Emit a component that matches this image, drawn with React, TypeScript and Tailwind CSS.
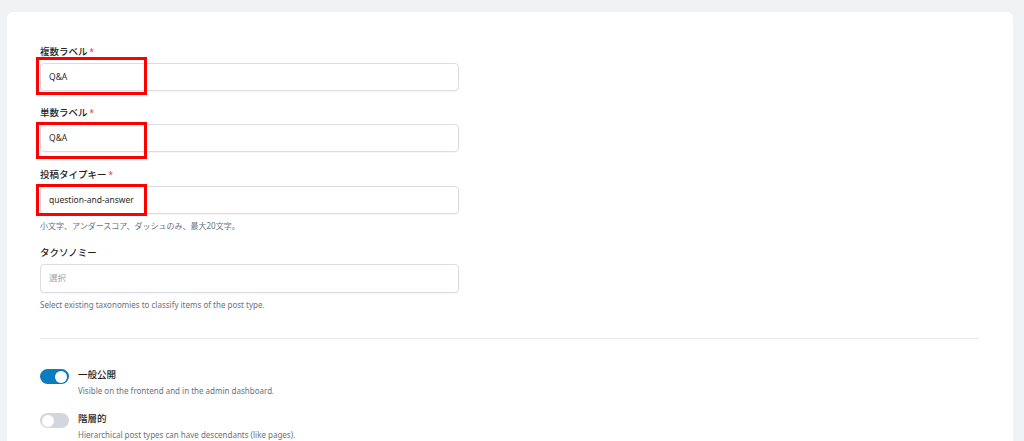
import React from 'react';

const font = { fontFamily: '"Noto Sans", "Noto Sans CJK JP", sans-serif' };

interface FieldProps {
  label: string;
  required?: boolean;
  value?: string;
  placeholder?: string;
  help?: string;
  mark?: string;
  tall?: boolean;
  className?: string;
}

const Field: React.FC<FieldProps> = ({ label, required, value, placeholder, help, mark, tall, className = '' }) => (
  <div className={className}>
    <div className="h-[14px] pt-[2px] leading-3 text-[9.5px] font-medium text-[#1e1e1e] mb-[5px]">
      {label}
      {required && <span className="text-[#e5484d] text-[8px] ml-[2px] align-top">*</span>}
    </div>
    <div className="relative w-[419px]">
      <div
        className={`${tall ? 'h-[29px]' : 'h-[28px]'} rounded-[4px] border border-[#dcdde4] bg-white shadow-[0_1px_1px_rgba(0,0,0,0.04)] flex items-center pl-[8px] text-[8.5px]`}
      >
        {value ? (
          <span className="text-[#2a2a2a]">{value}</span>
        ) : (
          <span className="text-[#9aa0a6]">{placeholder}</span>
        )}
      </div>
      {mark && <div className={`absolute border-[3px] border-[#ff0000] ${mark}`} />}
    </div>
    {help && <div className="mt-[6px] h-3 leading-3 text-[8px] text-[#6b7280]">{help}</div>}
  </div>
);

const Toggle: React.FC<{ on?: boolean; title: string; desc: string; className?: string }> = ({ on, title, desc, className = '' }) => (
  <div className={`flex items-start gap-[9px] ${className}`}>
    <div className={`w-[29px] h-[15px] rounded-full flex items-center px-[2px] ${on ? 'bg-[#0c7cc0] justify-end' : 'bg-[#d3d6dc] justify-start'}`}>
      <div className="w-[12px] h-[12px] rounded-full bg-white" />
    </div>
    <div>
      <div className="h-3 leading-3 text-[9.5px] font-medium text-[#1e1e1e]">{title}</div>
      <div className="mt-[4px] h-3 leading-3 text-[8px] text-[#6b7280]">{desc}</div>
    </div>
  </div>
);

export default function App() {
  return (
    <div className="w-[1024px] h-[441px] bg-[#f1f2f4] pt-3 pl-[7px] pr-[11px] overflow-hidden" style={font}>
      <div className="bg-white rounded-t-[6px] h-[440px] pl-[33px] pr-[34px] pt-[32px]">
        <Field label="複数ラベル" required value="Q&A" mark="left-[-4px] top-[-6px] w-[111px] h-[38px]" />
        <Field className="mt-[14px]" label="単数ラベル" required value="Q&A" mark="left-[-4px] top-[-2px] w-[111px] h-[37px]" />
        <Field
          className="mt-[15px]"
          label="投稿タイプキー"
          required
          value="question-and-answer"
          help="小文字、アンダースコア、ダッシュのみ、最大20文字。"
          mark="left-[-4px] top-[-2px] w-[111px] h-[32px]"
        />
        <Field
          className="mt-[13px]"
          label="タクソノミー"
          placeholder="選択"
          tall
          help="Select existing taxonomies to classify items of the post type."
        />
        <div className="mt-[27px] border-t border-[#e8e9ec]" />
        <Toggle className="mt-[30px]" on title="一般公開" desc="Visible on the frontend and in the admin dashboard." />
        <Toggle className="mt-[16px]" title="階層的" desc="Hierarchical post types can have descendants (like pages)." />
      </div>
    </div>
  );
}
